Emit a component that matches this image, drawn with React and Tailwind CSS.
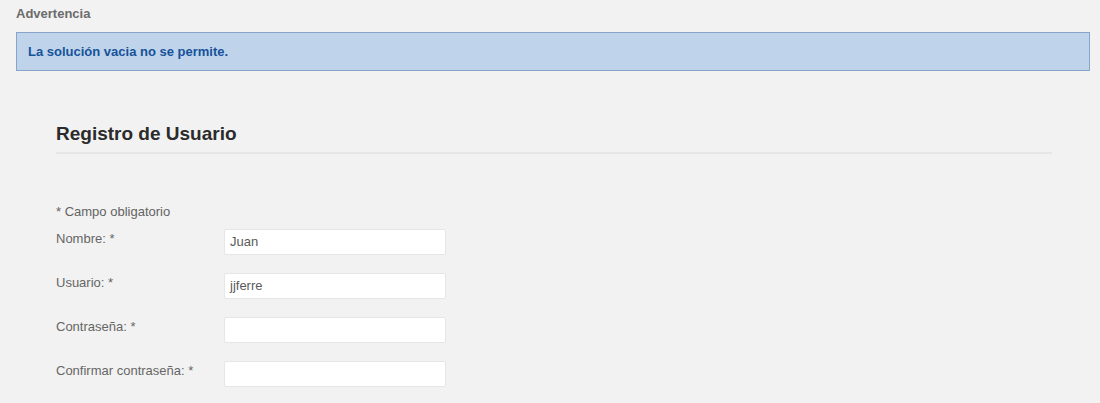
export default function App() {
  const rows = [
    { label: 'Nombre: *', value: 'Juan' },
    { label: 'Usuario: *', value: 'jjferre' },
    { label: 'Contraseña: *', value: '' },
    { label: 'Confirmar contraseña: *', value: '' },
  ];

  return (
    <div className="w-[1100px] h-[403px] overflow-hidden bg-[#f2f2f2] font-['Liberation_Sans',Arial,sans-serif]">
      {/* Warning */}
      <div className="pl-4 pr-[10px] pt-[6px]">
        <div className="text-[13px] font-bold text-[#6b6b6b] leading-[15px]">Advertencia</div>
        <div className="mt-[11px] h-[39px] border border-[#86a5c9] bg-[#bfd4ea] flex items-center pl-[11px]">
          <span className="text-[13px] font-bold text-[#16529a]">La solución vacia no se permite.</span>
        </div>
      </div>

      {/* Form */}
      <div className="pl-14 pr-12 pt-[51px]">
        <h2 className="text-[19px] font-bold text-[#2b2b2b] leading-[24px]">Registro de Usuario</h2>
        <div className="mt-[6px] h-[2px] bg-[#e6e6e6]" />

        <div className="mt-[50px] text-[13px] text-[#636363] leading-[15px]">* Campo obligatorio</div>

        <div className="mt-[10px] flex flex-col gap-[18px]">
          {rows.map((r) => (
            <div key={r.label} className="flex items-start">
              <label className="w-[168px] pt-[2px] text-[13px] text-[#666] leading-[15px]">{r.label}</label>
              <div className="w-[222px] h-[26px] bg-white border border-[#e6e6e6] rounded-[2px] flex items-center px-[5px] text-[13px] text-[#5a5a5a]">
                {r.value}
              </div>
            </div>
          ))}
        </div>
      </div>
    </div>
  );
}
